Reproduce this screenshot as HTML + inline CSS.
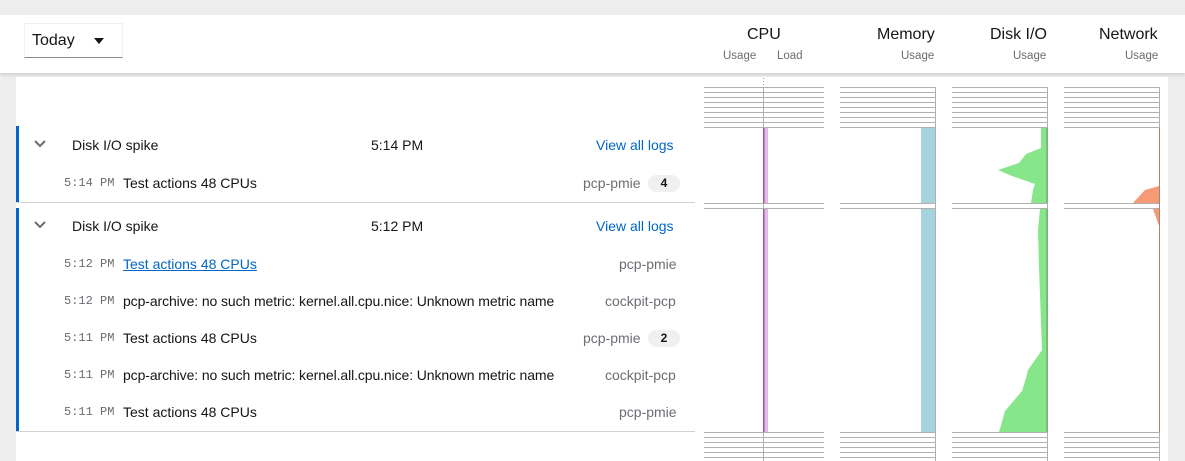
<!DOCTYPE html>
<html><head><style>
*{margin:0;padding:0;box-sizing:border-box}
body{width:1185px;height:461px;background:#ededed;position:relative;overflow:hidden;font-family:"Liberation Sans",sans-serif;color:#151515}
.a{position:absolute;white-space:nowrap}
.hdr{position:absolute;left:0;top:15px;width:1185px;height:58px;background:#fff;box-shadow:0 2px 3px rgba(0,0,0,.12)}
.card{position:absolute;left:16px;top:77px;width:1152px;height:384px;background:#fff}
.t{font-size:14px;line-height:16px}
.m{font-family:"Liberation Mono",monospace;font-size:12px;color:#6a6e73;line-height:16px}
.g{font-size:14px;color:#6a6e73;line-height:16px}
.lk{font-size:14px;color:#0066cc;line-height:16px}
.h{font-size:16px;line-height:18px}
.s{font-size:11.5px;color:#6a6e73;line-height:13px}
.badge{position:absolute;background:#f0f0f0;border-radius:10px;font-size:12px;width:32px;height:17px;text-align:center;line-height:17px;font-weight:bold;color:#151515}
.n{letter-spacing:-0.1px}
</style></head><body>
<div class="hdr"></div>
<div class="a" style="left:24px;top:23px;width:99px;height:35px;border:1px solid #f0f0f0;border-bottom:1px solid #8a8d90;background:#fff"></div>
<div class="a" style="left:32px;top:31px;font-size:16px;line-height:20px">Today</div>
<div class="a" style="left:94px;top:38px;width:0;height:0;border-left:5px solid transparent;border-right:5px solid transparent;border-top:6px solid #151515"></div>

<div class="a h" style="left:747px;top:26px">CPU</div>
<div class="a s" style="left:723px;top:50px">Usage</div>
<div class="a s" style="left:777px;top:50px">Load</div>
<div class="a h" style="left:877px;top:26px">Memory</div>
<div class="a s" style="left:901px;top:50px">Usage</div>
<div class="a h" style="left:990px;top:26px">Disk I/O</div>
<div class="a s" style="left:1013px;top:50px">Usage</div>
<div class="a h" style="left:1099px;top:26px">Network</div>
<div class="a s" style="left:1125px;top:50px">Usage</div>

<div class="card"></div>
<div class="a" style="left:16px;top:126px;width:3px;height:76px;background:#0066cc"></div>
<div class="a" style="left:16px;top:208px;width:3px;height:223px;background:#0066cc"></div>
<div class="a" style="left:16px;top:202px;width:679px;height:1px;background:#d2d2d2"></div>
<div class="a" style="left:16px;top:431px;width:679px;height:1px;background:#d2d2d2"></div>

<svg class="a" style="left:34px;top:140px" width="12" height="8"><path d="M1 1 L6 6 L11 1" stroke="#6a6e73" stroke-width="2" fill="none"/></svg>
<svg class="a" style="left:34px;top:221px" width="12" height="8"><path d="M1 1 L6 6 L11 1" stroke="#6a6e73" stroke-width="2" fill="none"/></svg>

<div class="a t" style="left:72px;top:137px">Disk I/O spike</div>
<div class="a t" style="left:371px;top:137px">5:14 PM</div>
<div class="a lk" style="left:596px;top:137px">View all logs</div>
<div class="a m" style="left:64px;top:175px">5:14 PM</div>
<div class="a t" style="left:123px;top:175px">Test actions 48 CPUs</div>
<div class="a g" style="left:583px;top:175px">pcp-pmie</div>
<div class="badge" style="left:648px;top:175px">4</div>

<div class="a t" style="left:72px;top:218px">Disk I/O spike</div>
<div class="a t" style="left:371px;top:218px">5:12 PM</div>
<div class="a lk" style="left:596px;top:218px">View all logs</div>

<div class="a m" style="left:64px;top:256px">5:12 PM</div>
<div class="a lk" style="left:123px;top:256px;text-decoration:underline">Test actions 48 CPUs</div>
<div class="a g" style="left:619px;top:256px">pcp-pmie</div>
<div class="a m" style="left:64px;top:293px">5:12 PM</div>
<div class="a t n" style="left:123px;top:293px">pcp-archive: no such metric: kernel.all.cpu.nice: Unknown metric name</div>
<div class="a g" style="left:605px;top:293px">cockpit-pcp</div>
<div class="a m" style="left:64px;top:330px">5:11 PM</div>
<div class="a t" style="left:123px;top:330px">Test actions 48 CPUs</div>
<div class="a g" style="left:583px;top:330px">pcp-pmie</div>
<div class="badge" style="left:648px;top:330px">2</div>
<div class="a m" style="left:64px;top:367px">5:11 PM</div>
<div class="a t n" style="left:123px;top:367px">pcp-archive: no such metric: kernel.all.cpu.nice: Unknown metric name</div>
<div class="a g" style="left:605px;top:367px">cockpit-pcp</div>
<div class="a m" style="left:64px;top:404px">5:11 PM</div>
<div class="a t" style="left:123px;top:404px">Test actions 48 CPUs</div>
<div class="a g" style="left:619px;top:404px">pcp-pmie</div>

<svg class="a" style="left:0;top:0" width="1185" height="461">
<g stroke="#b0b0b0" stroke-width="1" shape-rendering="crispEdges">
<path d="M704 87.5H824M704 92.5H824M704 97.5H824M704 102.5H824M704 107.5H824M704 112.5H824M704 117.5H824M704 122.5H824M704 127.5H824M704 203.5H824M704 208.5H824M704 432.5H824M704 437.5H824M704 442.5H824M704 447.5H824M704 452.5H824M704 457.5H824"/>
<path d="M840 87.5H935M840 92.5H935M840 97.5H935M840 102.5H935M840 107.5H935M840 112.5H935M840 117.5H935M840 122.5H935M840 127.5H935M840 203.5H935M840 208.5H935M840 432.5H935M840 437.5H935M840 442.5H935M840 447.5H935M840 452.5H935M840 457.5H935"/>
<path d="M952 87.5H1047M952 92.5H1047M952 97.5H1047M952 102.5H1047M952 107.5H1047M952 112.5H1047M952 117.5H1047M952 122.5H1047M952 127.5H1047M952 203.5H1047M952 208.5H1047M952 432.5H1047M952 437.5H1047M952 442.5H1047M952 447.5H1047M952 452.5H1047M952 457.5H1047"/>
<path d="M1064 87.5H1159M1064 92.5H1159M1064 97.5H1159M1064 102.5H1159M1064 107.5H1159M1064 112.5H1159M1064 117.5H1159M1064 122.5H1159M1064 127.5H1159M1064 203.5H1159M1064 208.5H1159M1064 432.5H1159M1064 437.5H1159M1064 442.5H1159M1064 447.5H1159M1064 452.5H1159M1064 457.5H1159"/>
<path d="M763.5 87V461M935.5 87V461M1047.5 87V461M1159.5 87V461"/>
</g>
<path d="M763.5 78V87" stroke="#999" stroke-dasharray="1 2"/>
<rect x="763" y="128" width="5" height="75" fill="#e4b8e8"/>
<rect x="763" y="209" width="5" height="223" fill="#e4b8e8"/>
<rect x="763" y="128" width="1.5" height="75" fill="#9a5aa0"/>
<rect x="763" y="209" width="1.5" height="223" fill="#9a5aa0"/>
<rect x="921" y="128" width="14" height="75" fill="#a5d3e0"/>
<rect x="921" y="209" width="14" height="223" fill="#a5d3e0"/>
<polygon points="1047,128 1041,128 1041,148 1026,154 1019,163 998,170 1012,176 1035,184 1033,190 1031,203 1047,203" fill="#88e68a"/>
<polygon points="1047,209 1040,209 1038,230 1039,268 1042,350 1028,370 1026,378 1022,391 1005,411 999,432 1047,432" fill="#88e68a"/>
<path d="M1047 128V203M1047 209V432" stroke="#5aa85c" stroke-width="1"/>
<polygon points="1159,186 1145,190 1133,203 1159,203" fill="#f59a75"/>
<polygon points="1153,209 1159,209 1159,226" fill="#f59a75"/>
<path d="M1159.5 128V432" stroke="#b08070" stroke-width="1"/>
</svg>
<div class="a" style="left:1168px;top:77px;width:17px;height:384px;background:#ededed"></div>
</body></html>
